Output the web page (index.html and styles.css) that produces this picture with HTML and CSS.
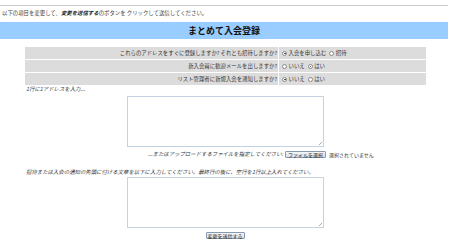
FILE: index.html
```html
<!DOCTYPE html>
<html lang="ja">
<head>
<meta charset="utf-8">
<link rel="stylesheet" href="styles.css">
</head>
<body>
<div class="page">
  <div class="topline"></div>
  <p class="intro">以下の項目を変更して、<b><i>変更を送信する</i></b>のボタンを クリックして送信してください。</p>
  <div class="bar">まとめて入会登録</div>
  <table class="opts">
    <tr>
      <td class="q">これらのアドレスをすぐに登録しますか? それとも招待しますか?</td>
      <td class="a"><span class="opt"><span class="radio on"></span>入会を申し込む</span><span class="opt"><span class="radio"></span>招待</span></td>
    </tr>
    <tr>
      <td class="q">新入会員に歓迎メールを出しますか?</td>
      <td class="a"><span class="opt"><span class="radio"></span>いいえ</span><span class="opt"><span class="radio on"></span>はい</span></td>
    </tr>
    <tr>
      <td class="q">リスト管理者に新規入会を通知しますか?</td>
      <td class="a"><span class="opt"><span class="radio on"></span>いいえ</span><span class="opt"><span class="radio"></span>はい</span></td>
    </tr>
  </table>
  <p class="label">1行に1アドレスを入力...</p>
  <div class="tawrap"><div class="ta"><span class="grip"></span></div></div>
  <div class="fileline"><i>...またはアップロードするファイルを指定してください:</i> <span class="btn">ファイルを選択</span> <span class="none">選択されていません</span></div>
  <p class="label label2">招待または入会の通知の先頭に付ける文章を以下に入力してください。最終行の後に、空行を1行以上入れてください。</p>
  <div class="tawrap"><div class="ta"><span class="grip"></span></div></div>
  <div class="submit"><span class="btn">変更を送信する</span></div>
</div>
</body>
</html>
```

FILE: styles.css
```css
html, body {
  margin: 0;
  padding: 0;
  background: #fff;
}
body {
  font-family: "Noto Sans CJK JP", "DejaVu Sans", sans-serif;
  color: #333;
  font-size: 5.4px;
}
.page {
  width: 448px;
}
.topline {
  margin-top: 5px;
  border-top: 1px solid #ccc;
}
.intro {
  margin: 3px 0 0 2px;
  line-height: 8px;
  height: 8px;
  color: #444;
}
.intro b { color: #222; }
.bar {
  margin-top: 5px;
  height: 17px;
  line-height: 17px;
  background: #99ccff;
  text-align: center;
  font-weight: bold;
  font-size: 9px;
  color: #111;
}
.opts {
  margin: 7px 0 0 25px;
  width: 401px;
  border-collapse: separate;
  border-spacing: 0 1px;
}
.opts td {
  background: #dcdcdc;
  height: 12px;
  padding: 0 1px;
  white-space: nowrap;
}
.opts td.q {
  text-align: right;
  width: 251px;
  border-right: 1px solid #fff;
}
.opts td.a {
  text-align: left;
  padding-left: 3px;
}
.opt {
  margin-right: 3px;
}
.radio {
  display: inline-block;
  box-sizing: border-box;
  width: 5px;
  height: 5px;
  border: 0.7px solid #888;
  border-radius: 50%;
  background: #fff;
  vertical-align: -0.5px;
  margin-right: 1.5px;
  position: relative;
}
.radio.on::after {
  content: "";
  position: absolute;
  left: 1px;
  top: 1px;
  width: 1.6px;
  height: 1.6px;
  border-radius: 50%;
  background: #333;
}
.label {
  margin: 0 0 0 26px;
  font-style: italic;
  line-height: 7px;
  height: 7px;
  color: #333;
}
.tawrap {
  display: flex;
  justify-content: flex-start;
  padding-left: 127px;
  margin-top: 3px;
}
.ta {
  box-sizing: border-box;
  width: 197px;
  height: 51px;
  border: 1px solid #c3d3e4;
  background: #fff;
  position: relative;
}
.grip {
  position: absolute;
  right: 1px;
  bottom: 1px;
  width: 3px;
  height: 3px;
  background: linear-gradient(135deg, transparent 45%, #aaa 45%, #aaa 55%, transparent 55%, transparent 70%, #aaa 70%, #aaa 80%, transparent 80%);
}
.fileline {
  margin: 4px 0 0 148px;
  height: 7px;
  line-height: 7px;
  display: flex;
  align-items: center;
  gap: 2px;
  white-space: nowrap;
}
.btn {
  display: inline-block;
  box-sizing: border-box;
  height: 7px;
  line-height: 5px;
  padding: 0 2px;
  border: 1px solid #8a9aae;
  border-radius: 1px;
  background: linear-gradient(#f4f6f9, #d9dee6);
  color: #222;
  font-size: 5px;
}
.fileline .none {
  font-size: 5px;
  margin-left: 1px;
}
.label2 {
  margin-top: 11px;
}
.label2 + .tawrap {
  margin-top: 1px;
}
.submit {
  display: flex;
  justify-content: center;
  margin-top: 4px;
  padding-left: 2px;
}
.submit .btn {
  width: 39px;
  text-align: center;
  padding: 0;
}
```
